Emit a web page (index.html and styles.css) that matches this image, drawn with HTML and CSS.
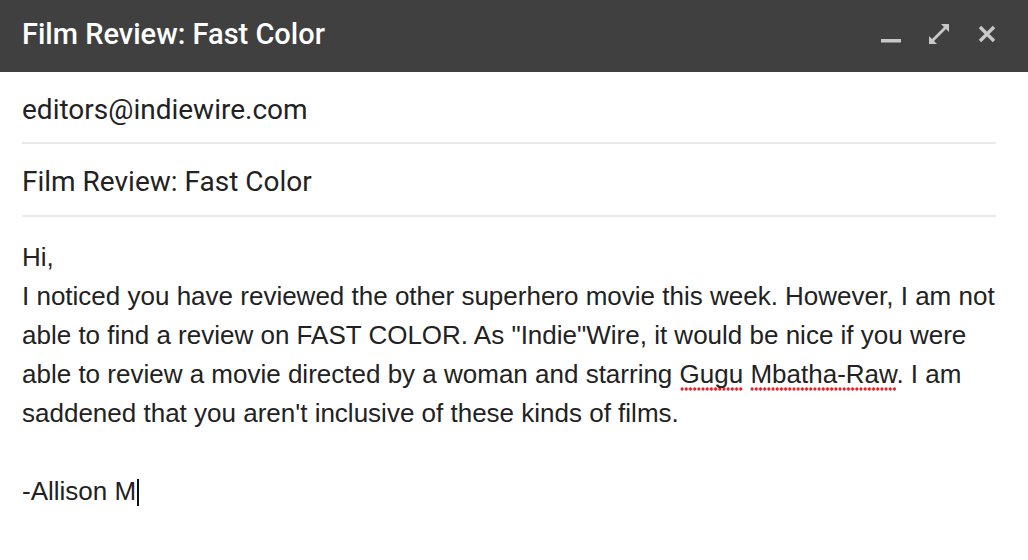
FILE: index.html
```html
<!DOCTYPE html>
<html>
<head>
<meta charset="utf-8">
<link rel="stylesheet" href="styles.css">
</head>
<body>
<div class="compose">
  <div class="titlebar">
    <div class="title">Film Review: Fast Color</div>
    <div class="actions">
      <svg class="icon" width="24" height="24" viewBox="0 0 24 24"><rect x="2" y="17" width="20" height="3.5" fill="#c8c8c8"/></svg>
      <svg class="icon" width="24" height="24" viewBox="0 0 24 24"><path d="M14 2h8v8l-3-3-12 12 3 3H2v-8l3 3L17 5z" fill="#c8c8c8"/></svg>
      <svg class="icon" width="24" height="24" viewBox="0 0 24 24"><path d="M5 5l14 14M19 5L5 19" stroke="#c8c8c8" stroke-width="3.4"/></svg>
    </div>
  </div>
  <div class="fields">
    <div class="field">editors@indiewire.com</div>
    <div class="field">Film Review: Fast Color</div>
  </div>
  <div class="body">
    <p>Hi,<br>I noticed you have reviewed the other superhero movie this week. However, I am not able to find a review on FAST COLOR. As "Indie"Wire, it would be nice if you were able to review a movie directed by a woman and starring <span class="spell">Gugu</span> <span class="spell">Mbatha-Raw</span>. I am saddened that you aren't inclusive of these kinds of films.</p>
    <p class="sig">-Allison M<span class="caret"></span></p>
  </div>
</div>
</body>
</html>
```
FILE: styles.css
```css
html, body {
  margin: 0;
  padding: 0;
  background: #ffffff;
}
.compose {
  width: 1028px;
  height: 560px;
  overflow: hidden;
  background: #ffffff;
}
.titlebar {
  height: 72px;
  background: #404040;
  display: flex;
  align-items: center;
  justify-content: space-between;
  padding: 0 29px 0 22px;
}
.title {
  font-family: Roboto, "Liberation Sans", sans-serif;
  font-weight: 500;
  font-size: 29px;
  color: #ffffff;
  margin-top: -5px;
}
.actions {
  display: flex;
  gap: 24px;
  align-items: center;
  margin-top: -4px;
}
.icon {
  display: block;
}
.fields {
  padding: 0 32px 0 22px;
}
.field {
  font-family: Roboto, "Liberation Sans", sans-serif;
  font-size: 28px;
  color: #222222;
  height: 71px;
  line-height: 76px;
  border-bottom: 2px solid #e9e9e9;
}
.field:first-child {
  height: 70px;
  line-height: 76px;
}
.body {
  padding: 21px 22px 0 22px;
  font-family: "Liberation Sans", Arial, sans-serif;
  font-size: 26px;
  line-height: 39px;
  color: #222222;
}
.body p {
  margin: 0 0 39px 0;
}
.spell {
  padding-bottom: 2px;
  background-image: radial-gradient(circle at 50% 50%, #e5232a 0, #e5232a 1.4px, rgba(229,35,42,0) 1.9px);
  background-size: 4.2px 4px;
  background-repeat: repeat-x;
  background-position: 0 100%;
}
.caret {
  display: inline-block;
  width: 2px;
  height: 27px;
  background: #111111;
  vertical-align: -6px;
  margin-left: 1px;
}
```
